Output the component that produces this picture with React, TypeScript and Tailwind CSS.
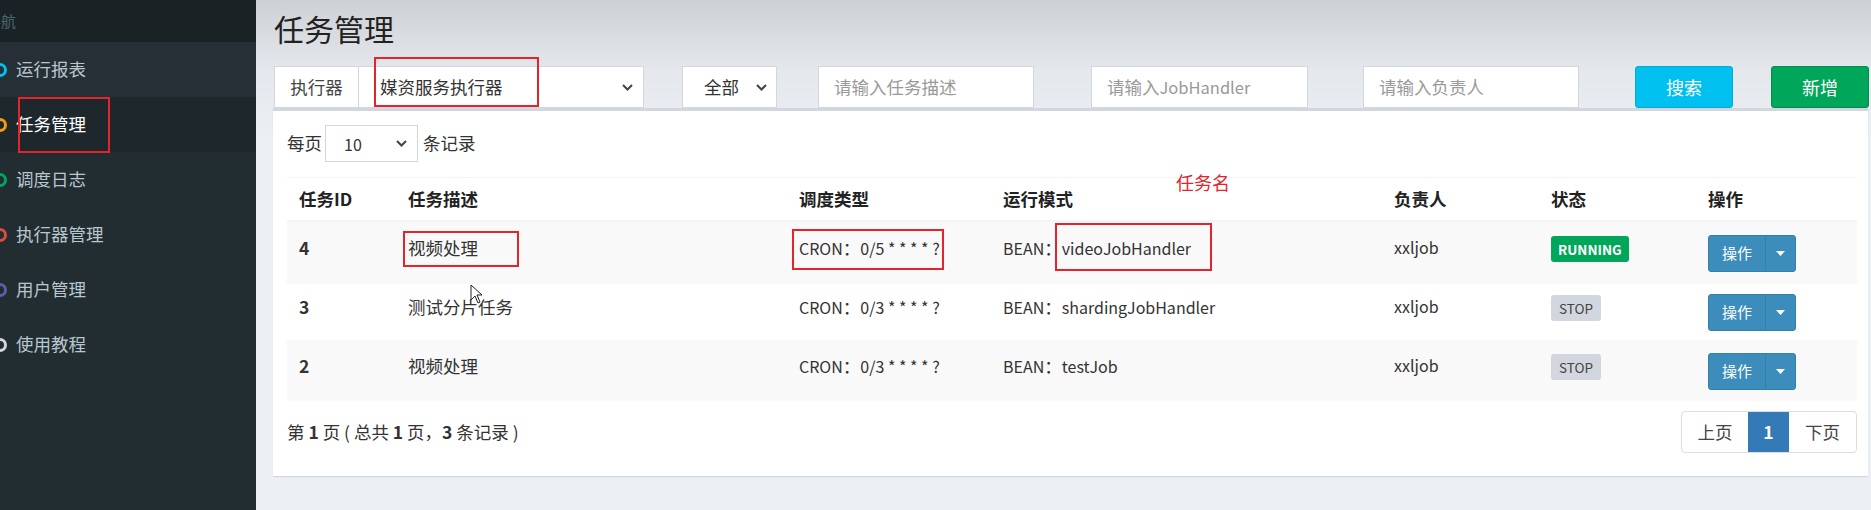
import { type ReactNode } from 'react';

const menu = [
	{ label: '运行报表', color: 'border-[#00c0ef]' },
	{ label: '任务管理', color: 'border-[#f39c12]', active: true },
	{ label: '调度日志', color: 'border-[#00a65a]' },
	{ label: '执行器管理', color: 'border-[#dd4b39]' },
	{ label: '用户管理', color: 'border-[#605ca8]' },
	{ label: '使用教程', color: 'border-[#d2d6de]' }
];

const jobs = [
	{ id: 4, desc: '视频处理', cron: '0/5', handler: 'videoJobHandler', running: true, h: 'h-[62px]', pt: 'pt-[13px]', bg: 'bg-[#f9f9f9]' },
	{ id: 3, desc: '测试分片任务', cron: '0/3', handler: 'shardingJobHandler', running: false, h: 'h-[56px]', pt: 'pt-[10px]', bg: 'bg-white' },
	{ id: 2, desc: '视频处理', cron: '0/3', handler: 'testJob', running: false, h: 'h-[61px]', pt: 'pt-[13px]', bg: 'bg-[#f9f9f9]' }
];

const Chevron = () => (
	<svg width="11" height="7" viewBox="0 0 11 7" fill="none">
		<path d="M1 1l4.5 4.5L10 1" stroke="#444" strokeWidth="2" />
	</svg>
);

const RedBox = ({ className }: { className: string }) => (
	<div className={`pointer-events-none absolute border-2 border-[#e4232b] ${className}`} />
);

const Cell = ({ children, className = '' }: { children: ReactNode; className?: string }) => (
	<div className={`pl-[12px] leading-[25px] ${className}`}>{children}</div>
);

const App = () => {
	return (
		<div className="relative flex h-[510px] w-[1871px] overflow-hidden font-['Noto_Sans_CJK_SC','Noto_Sans',sans-serif] text-[#333]">
			{/* sidebar */}
			<aside className="w-[256px] shrink-0 bg-[#222d32]">
				<div className="flex h-[42px] items-center bg-[#1a2226] pl-0">
					<span className="ml-[-14px] text-[15px] text-[#4b646f]">导航</span>
				</div>
				{menu.map(item => (
					<div
						key={item.label}
						className={`flex h-[55px] items-center gap-[9px] text-[17.5px] ${
							item.active ? 'bg-[#1e282c] text-white' : 'text-[#b8c7ce]'
						} ${item.label === '运行报表' ? 'bg-[#252f35]' : ''}`}
					>
						<span className={`ml-[-7px] h-[14px] w-[14px] rounded-full border-[3px] ${item.color}`} />
						<span>{item.label}</span>
					</div>
				))}
			</aside>

			{/* main */}
			<main className="flex-1 bg-[linear-gradient(180deg,#cdd1d6_0px,#e4e7eb_70px,#ecf0f5_140px)] pl-[17px] pr-[3px]">
				<div className="h-[66px] pl-[1px] pt-[10px]">
					<h1 className="text-[30px] leading-[36px] text-[#222]">任务管理</h1>
				</div>

				<div className="flex h-[42px] pl-[1px] text-[17.5px]">
					<div className="flex w-[370px] border border-[#d2d6de] bg-white">
						<span className="flex w-[84px] items-center justify-center border-r border-[#d2d6de] text-[#444]">执行器</span>
						<div className="flex flex-1 items-center justify-between pl-[21px] pr-[10px] text-[#333]">
							<span>媒资服务执行器</span>
							<Chevron />
						</div>
					</div>
					<div className="ml-[38px] flex w-[95px] items-center justify-between border border-[#d2d6de] bg-white pl-[21px] pr-[9px]">
						<span>全部</span>
						<Chevron />
					</div>
					<div className="ml-[41px] flex w-[216px] items-center border border-[#d2d6de] bg-white pl-[15px] text-[#999]">请输入任务描述</div>
					<div className="ml-[57px] flex w-[217px] items-center border border-[#d2d6de] bg-white pl-[15px] text-[#999]">
						请输入<span className="text-[16.5px]">JobHandler</span>
					</div>
					<div className="ml-[55px] flex w-[216px] items-center border border-[#d2d6de] bg-white pl-[15px] text-[#999]">请输入负责人</div>
					<button className="ml-[56px] w-[98px] rounded-[3px] border border-[#00acd6] bg-[#00c0ef] text-[18px] text-white">搜索</button>
					<button className="ml-[38px] w-[98px] rounded-[3px] border border-[#008d4c] bg-[#00a65a] text-[18px] text-white">新增</button>
				</div>

				{/* box */}
				<div className="w-[1595px] border-t-[3px] border-[#d2d6de] bg-white pb-[23px] pl-[14px] pr-[11px] pt-[14px] text-[17.5px] shadow-[0_1px_1px_rgba(0,0,0,0.1)]">
					<div className="flex h-[37px] items-center">
						<span>每页</span>
						<div className="ml-[3px] flex h-[37px] w-[93px] items-center justify-between border border-[#d2d6de] pl-[18px] pr-[10px] text-[16px]">
							<span>10</span>
							<Chevron />
						</div>
						<span className="ml-[5px]">条记录</span>
					</div>

					<div className="mt-[15px] grid grid-cols-[109px_391px_204px_391px_157px_157px_1fr]">
						{['任务ID', '任务描述', '调度类型', '运行模式', '负责人', '状态', '操作'].map(h => (
							<div key={h} className="flex h-[45px] items-center border-t border-b-2 border-t-[#f4f4f4] border-b-[#f4f4f4] pl-[12px] font-bold text-[#222]">
								{h}
							</div>
						))}
					</div>

					{jobs.map(job => (
						<div key={job.id} className={`grid grid-cols-[109px_391px_204px_391px_157px_157px_1fr] ${job.h} ${job.bg}`}>
							<Cell className={`${job.pt} font-semibold`}>{job.id}</Cell>
							<Cell className={job.pt}>{job.desc}</Cell>
							<Cell className={`${job.pt} text-[16px]`}>
								CRON<span className="text-[17.5px]">：</span>
								{job.cron} * * * * ?
							</Cell>
							<Cell className={`${job.pt} text-[16px]`}>
								BEAN<span className="text-[17.5px]">：</span>
								{job.handler}
							</Cell>
							<Cell className={`${job.pt} text-[16px]`}>xxljob</Cell>
							<div className={`pl-[12px] ${job.pt}`}>
								{job.running ? (
									<span className="inline-block rounded-[3px] bg-[#00a65a] px-[7px] text-[13.5px] font-bold leading-[26px] text-white">RUNNING</span>
								) : (
									<span className="inline-block rounded-[3px] bg-[#d2d6de] px-[8px] text-[13.5px] leading-[26px] text-[#444]">STOP</span>
								)}
							</div>
							<div className={`pl-[12px] ${job.pt}`}>
								<div className="flex h-[37px] w-[88px] overflow-hidden rounded-[3px] border border-[#367fa9] bg-[#3c8dbc] text-white">
									<span className="flex w-[57px] items-center justify-center border-r border-[#367fa9] text-[15px]">操作</span>
									<span className="flex flex-1 items-center justify-center">
										<svg width="9" height="5" viewBox="0 0 9 5">
											<path d="M0 0h9L4.5 5z" fill="#fff" />
										</svg>
									</span>
								</div>
							</div>
						</div>
					))}

					<div className="mt-[10px] flex h-[42px] items-center justify-between">
						<span>
							第 <b>1</b> 页 ( 总共 <b>1</b> 页，<b>3</b> 条记录 )
						</span>
						<div className="flex h-[42px] overflow-hidden rounded-[4px] border border-[#ddd] text-[#444]">
							<span className="flex w-[66px] items-center justify-center">上页</span>
							<span className="flex w-[41px] items-center justify-center bg-[#337ab7] font-bold text-white">1</span>
							<span className="flex w-[67px] items-center justify-center">下页</span>
						</div>
					</div>
				</div>
			</main>

			{/* annotations */}
			<RedBox className="left-[18px] top-[97px] h-[56px] w-[92px]" />
			<RedBox className="left-[374px] top-[57px] h-[50px] w-[165px]" />
			<RedBox className="left-[403px] top-[231px] h-[36px] w-[116px]" />
			<RedBox className="left-[792px] top-[229px] h-[41px] w-[152px]" />
			<RedBox className="left-[1055px] top-[223px] h-[48px] w-[157px]" />
			<span className="absolute left-[1176px] top-[169px] text-[18px] leading-[26px] text-[#e4232b]">任务名</span>
			<svg className="absolute left-[470px] top-[284px]" width="13" height="20" viewBox="0 0 13 20">
				<path d="M1 1v15l4-4 3 7 2-1-3-7h5z" fill="#fff" stroke="#222" strokeWidth="1" strokeLinejoin="round" />
			</svg>
		</div>
	);
};

export default App;
